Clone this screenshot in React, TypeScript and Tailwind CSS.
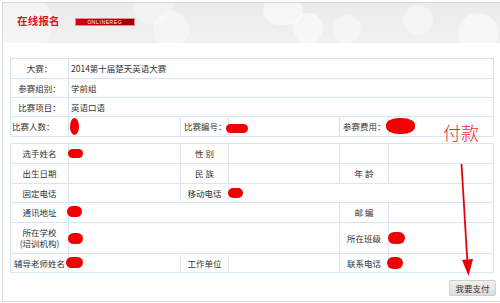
const FONT = "font-['Noto_Sans_CJK_SC','Noto_Sans',sans-serif]";

function Cell({ children, className = "" }: { children?: React.ReactNode; className?: string }) {
  return <div className={`bg-white flex items-center text-[8.5px] leading-[11px] text-[#333] ${className}`}>{children}</div>;
}

function Blob({ x, y, w, h, r = "rounded-full" }: { x: number; y: number; w: number; h: number; r?: string }) {
  return <div className={`absolute bg-[#f00000] ${r}`} style={{ left: x, top: y, width: w, height: h }} />;
}

export default function App() {
  return (
    <div className={`relative w-[500px] h-[303px] bg-white pt-[2px] pl-[2px] overflow-hidden ${FONT}`}>
      <div className="h-[300px] border-t border-l border-b border-[#dadada]">
        {/* header */}
        <div className="relative h-[40px] overflow-hidden bg-gradient-to-b from-[#ebebeb] to-[#f1f1f1] flex items-center pl-[14px] pb-[3px]">
          <div className="absolute left-[-20px] top-[-10px] w-[70px] h-[60px] rounded-full bg-white/40" />
          <div className="absolute left-[130px] top-[-18px] w-[40px] h-[40px] rounded-full bg-white/30" />
          <div className="absolute left-[150px] top-[8px] w-[36px] h-[36px] rounded-full bg-white/40" />
          <div className="absolute left-[260px] top-[-8px] w-[40px] h-[30px] rounded-full bg-white/50" />
          <div className="absolute left-[290px] top-[10px] w-[30px] h-[30px] rounded-full bg-white/50" />
          <div className="absolute left-[330px] top-[12px] w-[28px] h-[28px] rounded-full bg-white/40" />
          <div className="absolute left-[400px] top-[2px] w-[30px] h-[30px] rounded-full bg-white/40" />
          <div className="absolute left-[455px] top-[10px] w-[40px] h-[40px] rounded-full bg-white/50" />
          <span className="relative text-[10.5px] font-bold text-[#d9171e] leading-none tracking-[0.2px]">在线报名</span>
          <span className="relative ml-[15px] w-[60px] h-[8px] bg-gradient-to-r from-[#d0000e] to-[#9a0006] border border-[#e88] text-white text-[5px] leading-[6px] tracking-[0.6px] flex items-center justify-center font-['Liberation_Sans',sans-serif]">
            ONLINEREG
          </span>
        </div>

        {/* body */}
        <div className="pt-[15px] pl-[7px]">
          <div className="w-[484px] grid grid-cols-[57px_111px_47px_110px_48px_104px] grid-rows-[19px_18px_18px_19px] gap-px p-px bg-[#d7e5f5]">
            <Cell className="justify-center">大赛：</Cell>
            <Cell className="col-span-5 pl-[2px]">2014第十届楚天英语大赛</Cell>
            <Cell className="justify-center">参赛组别：</Cell>
            <Cell className="col-span-5 pl-[2px]">学前组</Cell>
            <Cell className="justify-center">比赛项目：</Cell>
            <Cell className="col-span-5 pl-[2px]">英语口语</Cell>
            <Cell className="pl-[1px]">比赛人数：</Cell>
            <Cell />
            <Cell className="pl-[3px]">比赛编号：</Cell>
            <Cell />
            <Cell className="pl-[3px]">参赛费用：</Cell>
            <Cell />
          </div>

          <div className="mt-[6px] w-[484px] grid grid-cols-[57px_111px_47px_110px_48px_104px] grid-rows-[19px_19px_18px_19px_30px_18px] gap-px p-px bg-[#d7e5f5]">
            <Cell className="justify-center">选手姓名</Cell>
            <Cell />
            <Cell className="justify-center">性 别</Cell>
            <Cell />
            <Cell />
            <Cell />

            <Cell className="justify-center">出生日期</Cell>
            <Cell />
            <Cell className="justify-center">民 族</Cell>
            <Cell />
            <Cell className="justify-center">年 龄</Cell>
            <Cell />

            <Cell className="justify-center">固定电话</Cell>
            <Cell />
            <Cell className="justify-center">移动电话</Cell>
            <Cell className="col-span-3" />

            <Cell className="justify-center">通讯地址</Cell>
            <Cell className="col-span-3" />
            <Cell className="justify-center">邮 编</Cell>
            <Cell />

            <Cell className="justify-center text-center">
              所在学校
              <br />
              (培训机构)
            </Cell>
            <Cell className="col-span-3" />
            <Cell className="justify-center">所在班级</Cell>
            <Cell />

            <Cell className="justify-center">辅导老师姓名</Cell>
            <Cell />
            <Cell className="justify-center">工作单位</Cell>
            <Cell />
            <Cell className="justify-center">联系电话</Cell>
            <Cell />
          </div>

          <div className="mt-[7px] flex justify-end mr-[-1px] pr-[5px]">
            <button className="h-[16px] w-[47px] bg-gradient-to-b from-[#f0f0f0] to-[#dcdcdc] border border-[#cfcfcf] rounded-[2px] text-[8.5px] text-[#333] leading-none">
              我要支付
            </button>
          </div>
        </div>
      </div>

      {/* annotations */}
      <Blob x={70} y={118} w={9} h={17} r="rounded-[50%]" />
      <Blob x={226} y={124} w={22} h={9} />
      <Blob x={386} y={118} w={29} h={16} r="rounded-[45%]" />
      <Blob x={68} y={149} w={15} h={9} />
      <Blob x={228} y={188} w={15} h={10} />
      <Blob x={67} y={206} w={15} h={11} />
      <Blob x={68} y={233} w={15} h={11} />
      <Blob x={66} y={257} w={17} h={11} />
      <Blob x={388} y={232} w={17} h={12} />
      <Blob x={387} y={257} w={16} h={12} />

      <span className="absolute left-[443px] top-[120px] text-[18px] leading-[24px] text-[#f0282a] font-light">付款</span>
      <svg className="absolute left-0 top-0" width="500" height="303" viewBox="0 0 500 303">
        <path d="M461.5 164 L467.5 264" stroke="#e8000a" strokeWidth="1.8" fill="none" />
        <path d="M462 260 L473 259 L468.5 276 Z" fill="#e8000a" />
      </svg>
    </div>
  );
}
